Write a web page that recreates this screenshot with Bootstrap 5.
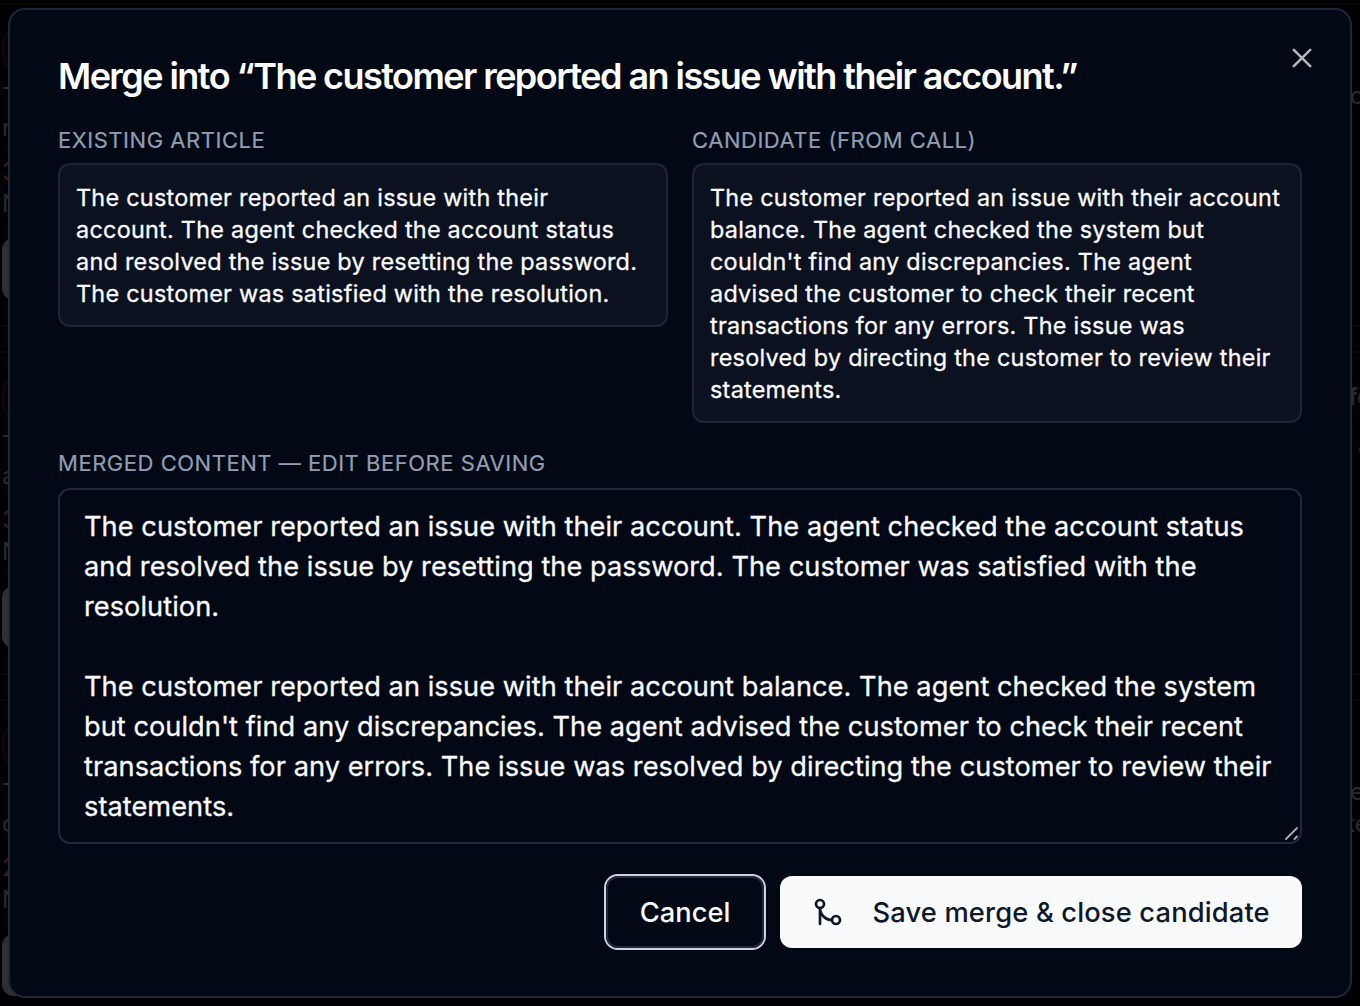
<!DOCTYPE html>
<html lang="en" data-bs-theme="dark">
<head>
<meta charset="utf-8">
<meta name="viewport" content="width=device-width, initial-scale=1">
<title>Merge article</title>
<link href="https://cdn.jsdelivr.net/npm/bootstrap@5.3.0/dist/css/bootstrap.min.css" rel="stylesheet">
<style>
body{font-family:Inter,"Liberation Sans",sans-serif;background:#000103;color:#f8fafc;height:1006px;overflow:hidden}
.page-behind{position:absolute;inset:0;overflow:hidden;font-size:24px;line-height:30px;color:#292a2d}
.page-behind>*{position:absolute}
.rule-line{left:0;right:0;height:2px;background:#070809}
.pill-red{left:2px;width:60px;height:40px;border-radius:14px;background:#0b0204;border:2px solid #0f0709}
.pill-grey{left:2px;width:60px;height:62px;border-radius:12px;background:#303030}
.num-red{color:#421718}
.merge-dialog{margin:8px 8px 0;height:990px;background:#020814;border:2px solid #1e2638;border-radius:17px;padding:44px 48px 0;position:relative}
.merge-title{font-size:36px;line-height:44px;font-weight:600;letter-spacing:-1.56px;white-space:nowrap}
.cap-label{font-size:22px;line-height:32px;letter-spacing:.53px;color:#909db2;white-space:nowrap;-webkit-text-stroke:.2px currentColor}
.pane{flex:1 1 0;min-width:0}
.pane-box{margin-top:7px;border:2px solid #1e2535;border-radius:12px;background:#0c111f;padding:17px 16px 15px;font-size:23.4px;line-height:32px;letter-spacing:.26px;white-space:nowrap;-webkit-text-stroke:.3px currentColor}
.merged-wrap{margin-top:9px}
.merged-input{height:356px;font-size:27.2px;letter-spacing:.045px;line-height:40px;-webkit-text-stroke:.3px currentColor;background:#020814!important;border:2px solid #1e293b;border-radius:12px;padding:17px 24px;color:#f8fafc;resize:none;overflow:hidden;white-space:pre;box-shadow:none!important}
.grip{position:absolute;right:2px;bottom:2px}
.close-x{position:absolute;right:38px;top:38px;line-height:0}
.act{height:72px;border-radius:12px;font-size:27.3px;font-weight:500;white-space:nowrap;padding-top:8px}
.act-cancel{width:158px;border:2px solid #1e293b;color:#f8fafc;box-shadow:0 0 0 2px #cbd5e1}
.act-save{width:522px;background:#f8fafc;color:#0f172a;padding-left:31px;gap:28.5px;letter-spacing:.15px}
.act-save svg{margin-bottom:2px}
</style>
</head>
<body>
<div class="page-behind" aria-hidden="true">
  <div class="rule-line" style="top:3px"></div><div class="rule-line" style="top:325px"></div><div class="rule-line" style="top:351px"></div><div class="rule-line" style="top:673px"></div><div class="rule-line" style="top:699px"></div>
  <div class="pill-red" style="top:30px"></div><div class="pill-red" style="top:378px"></div><div class="pill-red" style="top:726px"></div>
  <span style="left:2px;top:82px">T</span><span style="left:2px;top:113px">r</span><span class="num-red" style="left:2px;top:157px">3</span><span style="left:2px;top:189px">N</span>
  <span style="left:2px;top:430px">T</span><span style="left:2px;top:461px">a</span><span class="num-red" style="left:2px;top:505px">3</span><span style="left:2px;top:537px">N</span>
  <span style="left:2px;top:778px">T</span><span style="left:2px;top:809px">c</span><span class="num-red" style="left:2px;top:853px">2</span><span style="left:2px;top:885px">N</span>
  <div class="pill-grey" style="top:238px"></div><div class="pill-grey" style="top:586px"></div><div class="pill-grey" style="top:934px"></div>
  <span style="left:1350px;top:81px">c</span><b style="left:1348px;top:382px">fe</b><span style="left:1358px;top:430px">a</span>
  <span style="left:1350px;top:777px">e</span><span style="left:1342px;top:809px">ke</span>
</div>
<main class="merge-dialog d-flex flex-column" role="dialog" aria-labelledby="mt">
  <div class="close-x"><svg width="20" height="20" viewBox="0 0 20 20" fill="none" stroke="#b3b5b9" stroke-width="2.6" stroke-linecap="round"><path d="M1.8 1.8 18.2 18.2M18.2 1.8 1.8 18.2"/></svg></div>
  <h1 class="merge-title mb-0" id="mt">Merge into “The customer reported an issue with their account.”</h1>
  <div class="d-flex gap-4 align-items-start" style="margin-top:26px">
    <section class="pane">
      <div class="cap-label">EXISTING ARTICLE</div>
      <div class="pane-box">The customer reported an issue with their<br>account. The agent checked the account status<br>and resolved the issue by resetting the password.<br>The customer was satisfied with the resolution.</div>
    </section>
    <section class="pane">
      <div class="cap-label">CANDIDATE (FROM CALL)</div>
      <div class="pane-box">The customer reported an issue with their account<br>balance. The agent checked the system but<br>couldn't find any discrepancies. The agent<br>advised the customer to check their recent<br>transactions for any errors. The issue was<br>resolved by directing the customer to review their<br>statements.</div>
    </section>
  </div>
  <label class="cap-label mt-4" for="merged">MERGED CONTENT — EDIT BEFORE SAVING</label>
  <div class="position-relative merged-wrap">
    <textarea class="form-control merged-input" id="merged" spellcheck="false">The customer reported an issue with their account. The agent checked the account status
and resolved the issue by resetting the password. The customer was satisfied with the
resolution.

The customer reported an issue with their account balance. The agent checked the system
but couldn't find any discrepancies. The agent advised the customer to check their recent
transactions for any errors. The issue was resolved by directing the customer to review their
statements.</textarea>
    <svg class="grip" width="16" height="16" viewBox="0 0 16 16" stroke="#a9abb0" stroke-width="1.8" stroke-linecap="round"><path d="M2 13 13 2M10.5 13 13 10.5"/></svg>
  </div>
  <div class="d-flex justify-content-end gap-3 mt-4 pt-2">
    <button class="btn act act-cancel" type="button">Cancel</button>
    <button class="btn act act-save d-flex align-items-center" type="button"><svg width="32" height="32" viewBox="0 0 24 24" fill="none" stroke="currentColor" stroke-width="2" stroke-linecap="round" stroke-linejoin="round"><circle cx="18" cy="18" r="3"/><circle cx="6" cy="6" r="3"/><path d="M6 21V9a9 9 0 0 0 9 9"/></svg><span>Save merge &amp; close candidate</span></button>
  </div>
</main>
<script src="https://cdn.jsdelivr.net/npm/bootstrap@5.3.0/dist/js/bootstrap.bundle.min.js"></script>
</body>
</html>
